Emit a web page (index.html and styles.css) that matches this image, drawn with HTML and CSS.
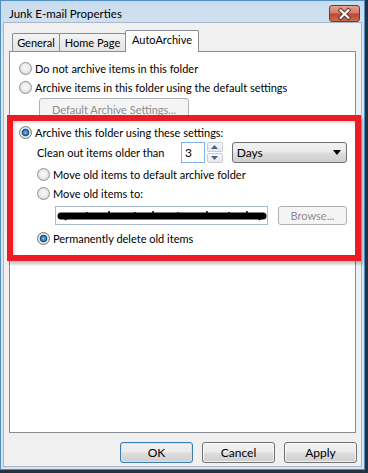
FILE: index.html
```html
<!DOCTYPE html>
<html lang="en">
<head>
    <meta charset="UTF-8">
    <title>Junk E-mail Properties</title>
    <link rel="stylesheet" href="styles.css">
</head>
<body>
    <div class="window">
        <div class="titlebar">
            <span class="title">Junk E-mail Properties</span>
            <span class="close">
                <svg width="30" height="16" viewBox="0 0 30 16">
                    <path d="M11 4 L19 12 M19 4 L11 12" stroke="#5a2a22" stroke-width="4" stroke-linecap="square"/>
                    <path d="M11 4 L19 12 M19 4 L11 12" stroke="#fff" stroke-width="2.2" stroke-linecap="square"/>
                </svg>
            </span>
        </div>
        <div class="client">
            <div class="tabs">
                <div class="tab tab-general">General</div>
                <div class="tab tab-home">Home Page</div>
                <div class="tab tab-auto active">AutoArchive</div>
            </div>
            <div class="panel">
                <div class="row"><span class="radio"></span><span class="label">Do not archive items in this folder</span></div>
                <div class="row"><span class="radio"></span><span class="label">Archive items in this folder using the default settings</span></div>
                <div class="row-btn"><span class="btn disabled wide">Default Archive Settings...</span></div>

                <div class="row row-archive"><span class="radio on"></span><span class="label">Archive this folder using these settings:</span></div>
                <div class="row-clean">
                    <span class="clean-label">Clean out items older than</span>
                    <span class="numbox">3</span>
                    <span class="spinner">
                        <span class="spin"><svg width="7" height="4" viewBox="0 0 7 4"><path d="M0 4 L3.5 0 L7 4 Z" fill="#4d6185"/></svg></span>
                        <span class="spin"><svg width="7" height="4" viewBox="0 0 7 4"><path d="M0 0 L3.5 4 L7 0 Z" fill="#4d6185"/></svg></span>
                    </span>
                    <span class="combo">
                        <span>Days</span>
                        <svg width="8" height="5" viewBox="0 0 8 5"><path d="M0 0 L8 0 L4 5 Z" fill="#000"/></svg>
                    </span>
                </div>
                <div class="row sub row-move1"><span class="radio"></span><span class="label">Move old items to default archive folder</span></div>
                <div class="row sub"><span class="radio"></span><span class="label">Move old items to:</span></div>
                <div class="row-path">
                    <span class="pathbox">
                        <svg width="210" height="15" viewBox="0 0 210 15">
                            <path d="M4 8 L206 8" stroke="#000" stroke-width="7" stroke-linecap="round"/>
                            <path d="M30 4 L30 6 M52 3 L52 6 M78 4 L78 6 M96 3 L96 6 M121 4 L121 6 M150 3 L150 6 M172 4 L172 6 M190 3 L190 6" stroke="#000" stroke-width="1.5"/>
                            <path d="M6 6 L9 12 M200 6 L203 12" stroke="#000" stroke-width="2"/>
                        </svg>
                    </span>
                    <span class="btn disabled browse">Browse...</span>
                </div>
                <div class="row sub row-delete"><span class="radio on"></span><span class="label">Permanently delete old items</span></div>
            </div>
            <div class="buttons">
                <span class="btn default">OK</span>
                <span class="btn">Cancel</span>
                <span class="btn">Apply</span>
            </div>
        </div>
    </div>
    <!-- red annotation drawn over the dialog -->
    <div class="highlight"></div>
</body>
</html>
```

FILE: styles.css
```css
/* Reset default styles */
* {
  box-sizing: border-box;
  margin: 0;
  padding: 0;
}

body {
  font-family: Lato, "Noto Sans", sans-serif;
  font-size: 11px;
  color: #000;
  background-color: #24323f;
  width: 368px;
  height: 473px;
  position: relative;
  overflow: hidden;
}

/* Window frame */
.window {
  width: 365px;
  height: 470px;
  border: 1px solid #4f8fc4;
  background: linear-gradient(#c9dcee, #dbe7f3 60px, #d6e3ef);
  display: flex;
  flex-direction: column;
  padding: 0 2px 2px 2px;
}

.titlebar {
  height: 21px;
  display: flex;
  align-items: center;
  justify-content: space-between;
  padding-left: 6px;
  flex: none;
}

.title {
  font-size: 11.5px;
  padding-top: 4px;
}

.close {
  width: 31px;
  height: 17px;
  margin-top: 4px;
  margin-right: 2px;
  border: 1px solid #6e3a31;
  border-radius: 3px;
  background: linear-gradient(#e4a393, #d27a66 45%, #bb4634 55%, #cf6a4f);
  display: flex;
  align-items: center;
  justify-content: center;
}

.close svg {
  display: block;
}

.client {
  flex: 1;
  background-color: #f0f0f0;
  border: 1px solid #a7b7c8;
  padding: 8px 0 0 5px;
}

/* Tabs */
.tabs {
  display: flex;
  align-items: flex-end;
  height: 20px;
  padding-left: 3px;
  position: relative;
  z-index: 1;
}

.tab {
  height: 18px;
  border: 1px solid #898c95;
  border-bottom: none;
  border-radius: 2px 2px 0 0;
  background: linear-gradient(#f4f4f4, #e4e4e4);
  line-height: 17px;
  text-align: center;
}

.tab-general {
  width: 48px;
}

.tab-home {
  width: 67px;
  margin-left: -1px;
}

.tab-auto {
  width: 74px;
  margin-left: -1px;
}

.tab.active {
  height: 22px;
  margin-bottom: -1px;
  background: #fff;
  line-height: 18px;
}

/* Panel */
.panel {
  width: 347px;
  height: 382px;
  background-color: #fff;
  border: 1px solid #898c95;
  padding: 7px 8px 0 9px;
}

.row {
  height: 19px;
  display: flex;
  align-items: center;
}

.row .label {
  margin-left: 3px;
}

.sub {
  padding-left: 18px;
}

.radio {
  width: 13px;
  height: 13px;
  flex: none;
  border-radius: 50%;
  border: 1px solid #929292;
  background: radial-gradient(circle at 50% 45%, #fbfbfb 0, #ececec 45%, #c9c9c9 100%);
}

.radio.on {
  border-color: #7a7a7a;
  background: radial-gradient(circle at 50% 50%, #79c3f5 0, #2e7fc6 2.2px, #173f6a 3.4px, #eeeeee 4.2px, #e2e2e2 5px, #c4c4c4 100%);
}

.row-btn {
  padding-left: 20px;
  margin-top: 1px;
  height: 23px;
}

.row-archive {
  margin-top: 2px;
}

/* Buttons */
.btn {
  display: inline-flex;
  align-items: center;
  justify-content: center;
  height: 21px;
  border: 1px solid #707070;
  border-radius: 3px;
  background: linear-gradient(#f2f2f2 0, #ebebeb 48%, #dddddd 52%, #cfcfcf 100%);
  box-shadow: inset 0 0 0 1px rgba(255, 255, 255, 0.7);
}

.btn.disabled {
  border-color: #adb2b5;
  background: #f4f4f4;
  color: #8d8d8d;
  box-shadow: none;
}

.btn.wide {
  width: 150px;
  height: 23px;
}

.btn.default {
  border-color: #3c7fb1;
  box-shadow: inset 0 0 0 1px #bfe6fb;
}

.row-clean {
  display: flex;
  align-items: center;
  height: 21px;
  padding-left: 18px;
}

.clean-label {
  width: 145px;
}

.numbox {
  width: 24px;
  height: 21px;
  border: 1px solid #7eb4ea;
  background: #fff;
  padding-left: 3px;
  line-height: 19px;
  font-size: 12px;
}

.spinner {
  width: 16px;
  height: 21px;
  margin-left: 2px;
  display: flex;
  flex-direction: column;
  justify-content: space-between;
}

.spin {
  height: 10px;
  border: 1px solid #c8cdd4;
  border-radius: 2px;
  background: linear-gradient(#f6f7f9, #e3e7ec);
  display: flex;
  align-items: center;
  justify-content: center;
}

.spin svg,
.combo svg {
  display: block;
}

.combo {
  width: 116px;
  height: 21px;
  margin-left: 9px;
  border: 1px solid #707070;
  border-radius: 3px;
  background: linear-gradient(#f2f2f2 0, #ebebeb 48%, #dddddd 52%, #cfcfcf 100%);
  display: flex;
  align-items: center;
  justify-content: space-between;
  padding: 0 5px 0 4px;
  font-size: 12px;
}

.row-move1 {
  margin-top: 2px;
}

.row-path {
  display: flex;
  align-items: center;
  height: 19px;
  margin-top: 3px;
  padding-left: 36px;
}

.pathbox {
  width: 213px;
  height: 19px;
  border: 1px solid #a9b9cf;
  background: #fff;
  display: flex;
  align-items: center;
  padding-left: 1px;
}

.pathbox svg {
  display: block;
}

.btn.browse {
  width: 70px;
  height: 19px;
  margin-left: 10px;
}

.row-delete {
  margin-top: 4px;
}

.buttons {
  display: flex;
  justify-content: flex-end;
  gap: 9px;
  padding-right: 4px;
  margin-top: 9px;
}

.buttons .btn {
  width: 73px;
  font-size: 12px;
}

/* Annotation */
.highlight {
  position: absolute;
  left: 7px;
  top: 115px;
  width: 354px;
  height: 146px;
  border: 6px solid #ed1c24;
  box-shadow: 2px 3px 3px rgba(0, 0, 0, 0.25), inset 2px 2px 3px rgba(0, 0, 0, 0.15);
}
```
